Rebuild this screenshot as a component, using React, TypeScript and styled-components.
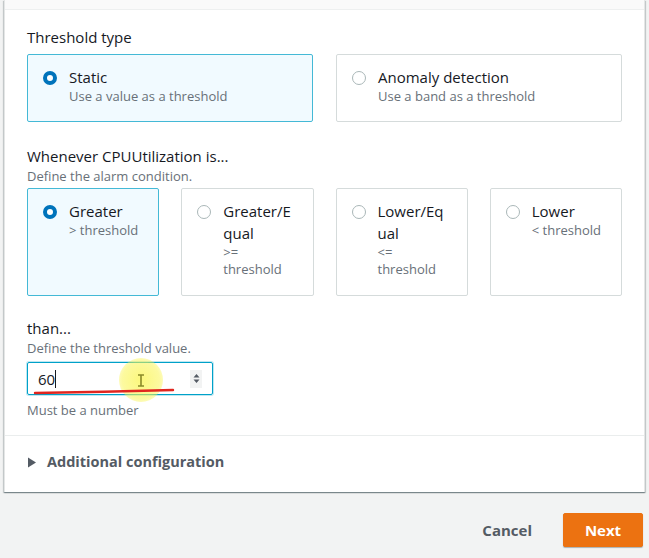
import React from "react";
import styled, { createGlobalStyle } from "styled-components";

const Global = createGlobalStyle`
  html, body { margin: 0; padding: 0; background: #f2f3f3; }
  body { font-family: "Open Sans", "Liberation Sans", Arial, sans-serif; color: #16191f; }
  * { box-sizing: border-box; }
`;

const Page = styled.div`
  width: 649px;
  height: 558px;
  background: #f2f3f3;
  overflow: hidden;
  display: flex;
  flex-direction: column;
`;

const Panel = styled.section`
  margin-left: 4px;
  width: 641px;
  background: #fff;
  border-left: 1px solid #e4e6e6;
  border-right: 1px solid #e4e6e6;
  box-shadow: 0 1px 1px 0 rgba(0, 28, 36, 0.3), 1px 1px 1px 0 rgba(0, 28, 36, 0.15),
    -1px 1px 1px 0 rgba(0, 28, 36, 0.15);
  display: flex;
  flex-direction: column;
`;

const HeaderStrip = styled.div`
  height: 10px;
  background: #fafafa;
  border-bottom: 1px solid #eef0f0;
`;

const Body = styled.div`
  padding: 16px 22px 16px 22px;
  display: flex;
  flex-direction: column;
`;

const Field = styled.div<{ $mt?: number }>`
  display: flex;
  flex-direction: column;
  margin-top: ${(p) => p.$mt ?? 0}px;
`;

const Label = styled.div`
  font-size: 15px;
  line-height: 22px;
  color: #16191f;
`;

const Hint = styled.div`
  font-size: 13px;
  line-height: 18px;
  color: #687078;
`;

const Tiles = styled.div<{ $cols: number; $gap: number; $mt: number }>`
  display: grid;
  grid-template-columns: repeat(${(p) => p.$cols}, 1fr);
  column-gap: ${(p) => p.$gap}px;
  margin-top: ${(p) => p.$mt}px;
`;

const Tile = styled.div<{ $active?: boolean; $h: number }>`
  height: ${(p) => p.$h}px;
  border: 1px solid ${(p) => (p.$active ? "#44b9d6" : "#d5dbdb")};
  background: ${(p) => (p.$active ? "#f1faff" : "#fff")};
  border-radius: 2px;
  padding: 11px 19px 0 15px;
  display: flex;
  align-items: flex-start;
  gap: 12px;
`;

const Radio = styled.span<{ $on?: boolean }>`
  flex: none;
  width: 14px;
  height: 14px;
  margin-top: 5px;
  border-radius: 50%;
  border: ${(p) => (p.$on ? "4px solid #0073bb" : "1.5px solid #aab7b8")};
  background: #fff;
`;

const TileText = styled.div`
  display: flex;
  flex-direction: column;
  min-width: 0;
  word-break: break-all;
`;

const TileTitle = styled.div`
  font-size: 15px;
  line-height: 22px;
  color: #16191f;
`;

const TileDesc = styled.div`
  font-size: 13px;
  line-height: 17px;
  color: #687078;
  word-break: normal;
`;

const InputWrap = styled.div`
  position: relative;
  margin-top: 5px;
  width: 186px;
  height: 33px;
  border: 1px solid #00a1c9;
  border-radius: 2px;
  box-shadow: 0 0 0 1px rgba(0, 161, 201, 0.25);
  display: flex;
  align-items: center;
  padding: 0 10px;
`;

const Value = styled.span`
  font-size: 15px;
  color: #16191f;
  border-right: 1px solid #16191f;
  line-height: 18px;
`;

const Spinner = styled.span`
  margin-left: auto;
  width: 12px;
  height: 18px;
  background: #f2f3f3;
  display: flex;
  align-items: center;
  justify-content: center;
`;

const Highlight = styled.span`
  position: absolute;
  left: 91px;
  top: -5px;
  width: 44px;
  height: 44px;
  border-radius: 50%;
  background: radial-gradient(circle, rgba(250, 245, 80, 0.75) 0%, rgba(250, 245, 80, 0.55) 60%, rgba(250, 245, 80, 0) 100%);
  display: flex;
  align-items: center;
  justify-content: center;
`;

const RedMark = styled.svg`
  position: absolute;
  left: 6px;
  top: 26px;
  overflow: visible;
`;

const HelpText = styled.div`
  margin-top: 6px;
  font-size: 13px;
  line-height: 18px;
  color: #687078;
`;

const Divider = styled.hr`
  margin: 0;
  border: none;
  border-top: 1px solid #eaeded;
`;

const Expander = styled.div`
  padding: 15px 22px 19px 22px;
  display: flex;
  align-items: center;
  gap: 10px;
  font-size: 14.5px;
  font-weight: 700;
  line-height: 22px;
  color: #545b64;
`;

const Footer = styled.div`
  display: flex;
  justify-content: flex-end;
  align-items: center;
  gap: 31px;
  padding: 21px 6px 0 0;
`;

const LinkButton = styled.button`
  border: none;
  background: none;
  padding: 0;
  font-family: inherit;
  font-size: 15px;
  font-weight: 700;
  color: #545b64;
`;

const PrimaryButton = styled.button`
  width: 80px;
  height: 34px;
  border: 1px solid #ec7211;
  border-radius: 2px;
  background: #ec7211;
  color: #fff;
  font-family: inherit;
  font-size: 15px;
  font-weight: 700;
  box-shadow: 0 1px 1px rgba(0, 28, 36, 0.3);
`;

type Opt = { title: string; desc: string; on?: boolean };

const typeOpts: Opt[] = [
  { title: "Static", desc: "Use a value as a threshold", on: true },
  { title: "Anomaly detection", desc: "Use a band as a threshold" },
];

const condOpts: Opt[] = [
  { title: "Greater", desc: "> threshold", on: true },
  { title: "Greater/Equal", desc: ">= threshold" },
  { title: "Lower/Equal", desc: "<= threshold" },
  { title: "Lower", desc: "< threshold" },
];

function OptionTile({ o, h }: { o: Opt; h: number }) {
  return (
    <Tile $active={o.on} $h={h}>
      <Radio $on={o.on} />
      <TileText>
        <TileTitle>{o.title}</TileTitle>
        <TileDesc>{o.desc}</TileDesc>
      </TileText>
    </Tile>
  );
}

export default function App() {
  return (
    <Page>
      <Global />
      <Panel>
        <HeaderStrip />
        <Body>
          <Field>
            <Label>Threshold type</Label>
            <Tiles $cols={2} $gap={23} $mt={6}>
              {typeOpts.map((o) => (
                <OptionTile key={o.title} o={o} h={68} />
              ))}
            </Tiles>
          </Field>
          <Field $mt={23}>
            <Label>Whenever CPUUtilization is...</Label>
            <Hint>Define the alarm condition.</Hint>
            <Tiles $cols={4} $gap={22} $mt={3}>
              {condOpts.map((o) => (
                <OptionTile key={o.title} o={o} h={108} />
              ))}
            </Tiles>
          </Field>
          <Field $mt={21}>
            <Label>than...</Label>
            <Hint>Define the threshold value.</Hint>
            <InputWrap>
              <Value>60</Value>
              <Highlight>
                <svg width="8" height="13" viewBox="0 0 8 13">
                  <path d="M1 1h6M4 1v11M1 12h6" stroke="#8a8a2a" strokeWidth="1.6" fill="none" />
                </svg>
              </Highlight>
              <RedMark width="140" height="6">
                <path d="M1 4 Q70 3 139 1" stroke="#e0261f" strokeWidth="2.4" fill="none" strokeLinecap="round" />
              </RedMark>
              <Spinner>
                <svg width="7" height="11" viewBox="0 0 7 11">
                  <path d="M3.5 1L6.5 4.5H0.5Z M3.5 10L6.5 6.5H0.5Z" fill="#545b64" />
                </svg>
              </Spinner>
            </InputWrap>
            <HelpText>Must be a number</HelpText>
          </Field>
        </Body>
        <Divider />
        <Expander>
          <svg width="10" height="11" viewBox="0 0 10 11">
            <path d="M1 0.5L9 5.5L1 10.5Z" fill="#545b64" />
          </svg>
          Additional configuration
        </Expander>
      </Panel>
      <Footer>
        <LinkButton>Cancel</LinkButton>
        <PrimaryButton>Next</PrimaryButton>
      </Footer>
    </Page>
  );
}
